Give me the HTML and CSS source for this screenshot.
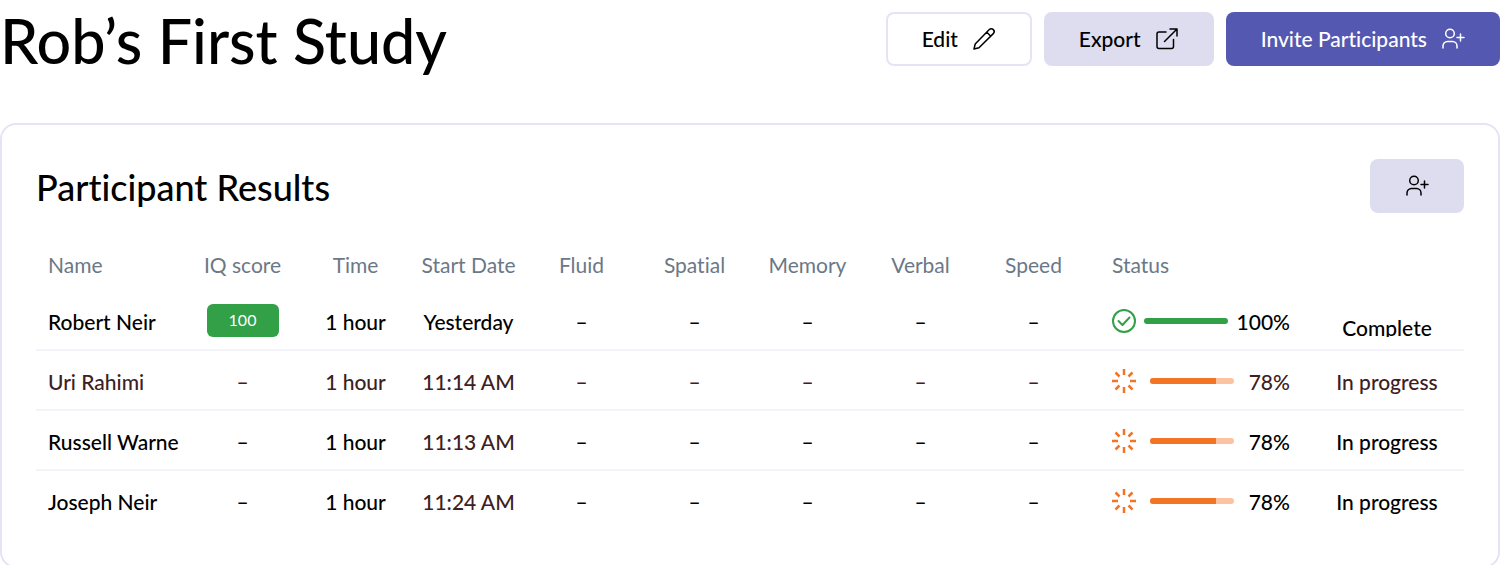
FILE: index.html
```html
<!DOCTYPE html>
<html lang="en">

<head>
    <meta charset="UTF-8">
    <title>Rob’s First Study</title>
    <link rel="stylesheet" href="styles.css">
</head>

<body>

    <!-- shared icons -->
    <svg class="sprite" aria-hidden="true">
        <symbol id="person-plus" viewBox="0 0 24 24">
            <circle cx="9" cy="6.500" r="4.300"/>
            <path d="M2 21v-2a4.500 4.500 0 0 1 4.500-4.500h5a4.500 4.500 0 0 1 4.500 4.500v2"/>
            <path d="M19.500 7v7M16 10.500h7"/>
        </symbol>
        <symbol id="check" viewBox="0 0 24 24">
            <circle cx="12" cy="12" r="11"/>
            <path d="M6.500 12l4 4 7-7.500"/>
        </symbol>
        <symbol id="spinner" viewBox="0 0 24 24">
            <path d="M12 0v6M12 18v6M0 12h6M18 12h6M3.500 3.500l4 4M16.500 16.500l4 4M3.500 20.500l4-4M16.500 7.500l4-4"/>
        </symbol>
    </svg>

    <header class="page-header">
        <h1>Rob’s First Study</h1>
        <div class="actions">
            <button type="button" class="btn btn-outline">
                Edit
                <svg class="icon" viewBox="0 0 24 24"><path d="M2 22l1.200-5L17.300 2.600a2.800 2.800 0 0 1 4 4L7 20.800 2 22zM14.800 5.200l4 4"/></svg>
            </button>
            <button type="button" class="btn btn-light">
                Export
                <svg class="icon" viewBox="0 0 24 24"><path d="M11 5H4a2 2 0 0 0-2 2v12.500a2 2 0 0 0 2 2h12.500a2 2 0 0 0 2-2v-7M15 2h7v7M22 2L9.500 14.500"/></svg>
            </button>
            <button type="button" class="btn btn-primary">
                Invite Participants
                <svg class="icon"><use href="#person-plus"/></svg>
            </button>
        </div>
    </header>

    <section class="card">
        <div class="card-header">
            <h2>Participant Results</h2>
            <button type="button" class="btn btn-light" aria-label="Add participant">
                <svg class="icon"><use href="#person-plus"/></svg>
            </button>
        </div>

        <table class="results">
            <colgroup>
                <col class="col-name">
                <col class="col-data" span="8">
                <col class="col-status">
                <col class="col-state">
            </colgroup>
            <thead>
                <tr>
                    <th class="name">Name</th>
                    <th>IQ score</th>
                    <th>Time</th>
                    <th>Start Date</th>
                    <th>Fluid</th>
                    <th>Spatial</th>
                    <th>Memory</th>
                    <th>Verbal</th>
                    <th>Speed</th>
                    <th class="status">Status</th>
                    <th></th>
                </tr>
            </thead>
            <tbody>
                <tr>
                    <td class="name">Robert Neir</td>
                    <td class="score-cell"><span class="score">100</span></td>
                    <td>1 hour</td>
                    <td>Yesterday</td>
                    <td>–</td>
                    <td>–</td>
                    <td>–</td>
                    <td>–</td>
                    <td>–</td>
                    <td class="status">
                        <div class="progress">
                            <svg class="icon icon-done"><use href="#check"/></svg>
                            <span class="bar bar-done"><span class="fill" style="width: 100%"></span></span>
                            <span class="percent">100%</span>
                        </div>
                    </td>
                    <td class="score-cell"><div class="complete">Complete</div></td>
                </tr>
                <tr class="muted">
                    <td class="name">Uri Rahimi</td>
                    <td>–</td>
                    <td>1 hour</td>
                    <td class="date">11:14 AM</td>
                    <td>–</td>
                    <td>–</td>
                    <td>–</td>
                    <td>–</td>
                    <td>–</td>
                    <td class="status">
                        <div class="progress">
                            <svg class="icon icon-pending"><use href="#spinner"/></svg>
                            <span class="bar"><span class="fill" style="width: 78%"></span></span>
                            <span class="percent">78%</span>
                        </div>
                    </td>
                    <td>In progress</td>
                </tr>
                <tr>
                    <td class="name">Russell Warne</td>
                    <td>–</td>
                    <td>1 hour</td>
                    <td class="date">11:13 AM</td>
                    <td>–</td>
                    <td>–</td>
                    <td>–</td>
                    <td>–</td>
                    <td>–</td>
                    <td class="status">
                        <div class="progress">
                            <svg class="icon icon-pending"><use href="#spinner"/></svg>
                            <span class="bar"><span class="fill" style="width: 78%"></span></span>
                            <span class="percent">78%</span>
                        </div>
                    </td>
                    <td>In progress</td>
                </tr>
                <tr>
                    <td class="name">Joseph Neir</td>
                    <td>–</td>
                    <td>1 hour</td>
                    <td class="date">11:24 AM</td>
                    <td>–</td>
                    <td>–</td>
                    <td>–</td>
                    <td>–</td>
                    <td>–</td>
                    <td class="status">
                        <div class="progress">
                            <svg class="icon icon-pending"><use href="#spinner"/></svg>
                            <span class="bar"><span class="fill" style="width: 78%"></span></span>
                            <span class="percent">78%</span>
                        </div>
                    </td>
                    <td>In progress</td>
                </tr>
            </tbody>
        </table>
    </section>

</body>
</html>
```
FILE: styles.css
```css
* {
    box-sizing: border-box;
}

body {
    margin: 0;
    background-color: white;
    color: black;
    font-family: Lato, "Liberation Sans", sans-serif;
    font-size: 21px;
    font-weight: 500;
    font-variant-ligatures: none;
    line-height: 28px;
    overflow: hidden;
}

h1, h2 {
    margin: 0;
    font-weight: 500;
}

h1 {
    font-size: 61px;
    line-height: 82px;
}

h2 {
    font-size: 36px;
    line-height: 56px;
}

.sprite {
    display: none;
}

.icon {
    width: 24px;
    height: 24px;
    flex: none;
    fill: none;
    stroke: currentColor;
    stroke-width: 1.5;
    stroke-linecap: round;
    stroke-linejoin: round;
}

.page-header {
    display: flex;
    justify-content: space-between;
    align-items: flex-start;
}

.actions {
    display: flex;
    gap: 12px;
    padding-top: 12px;
}

/* Buttons */
.btn {
    display: flex;
    align-items: center;
    justify-content: center;
    gap: 14px;
    height: 54px;
    padding: 0 34px;
    border: 1px solid transparent;
    border-radius: 8px;
    color: black;
    font: inherit;
    cursor: pointer;
}

.btn-outline {
    background-color: white;
    border: 2px solid #e4e4f4;
}

.btn-light {
    background-color: #ddddef;
}

.btn-primary {
    background-color: #5558b0;
    color: white;
}

/* Results card */
.card {
    margin-top: 41px;
    padding: 34px 34px 35px;
    border: 2px solid #e4e4f4;
    border-radius: 16px;
}

.card-header {
    display: flex;
    justify-content: space-between;
    align-items: flex-start;
}

.results {
    width: 100%;
    table-layout: fixed;
    border-collapse: separate;
    border-spacing: 0;
}

.col-name {
    width: 150px;
}

.col-data {
    width: 113px;
}

.col-status {
    width: 220px;
}

.col-state {
    width: 154px;
}

.results th,
.results td {
    padding: 0;
    text-align: center;
    white-space: nowrap;
}

.results th {
    height: 76px;
    padding-top: 24px;
    color: #6b7887;
    font-weight: 400;
}

.results td {
    height: 60px;
    padding-top: 4px;
    border-bottom: 2px solid #f3f3fa;
}

.results tr:last-child td {
    border-bottom-color: transparent;
}

.results .name {
    padding-left: 12px;
    text-align: left;
}

.results .status {
    padding-top: 2px;
    padding-left: 22px;
    padding-right: 20px;
    text-align: left;
}

.results th.status {
    padding-top: 24px;
}

.results .score-cell {
    padding-top: 0;
}

.muted,
.date {
    color: #3d2022;
}

.score {
    display: block;
    width: 72px;
    height: 33px;
    margin: 0 auto;
    border-radius: 6px;
    background-color: #32a047;
    color: white;
    font-size: 16px;
    font-weight: 400;
    line-height: 32px;
}

.progress {
    display: flex;
    justify-content: space-between;
    align-items: center;
}

.percent {
    padding-top: 2px;
}

.bar {
    width: 84px;
    height: 6px;
    border-radius: 3px;
    background-color: #fbc3a2;
    overflow: hidden;
}

.fill {
    display: block;
    height: 100%;
    background-color: #f47426;
}

.bar-done .fill {
    background-color: #32a047;
}

.icon-done {
    color: #32a047;
    stroke-width: 2;
}

.icon-pending {
    color: #f47426;
    stroke-width: 2.5;
    stroke-linecap: butt;
}

.complete {
    height: 33px;
    padding-top: 10px;
    overflow: hidden;
}
```
